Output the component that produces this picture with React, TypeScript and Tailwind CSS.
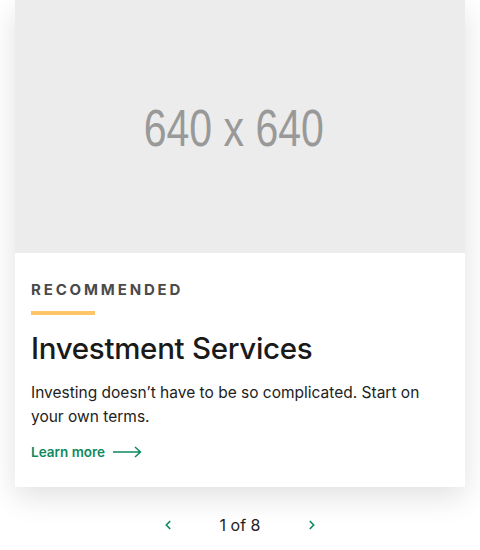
import { ChevronLeft, ChevronRight } from "lucide-react";

export default function App() {
  return (
    <div className="min-h-[550px] bg-white font-['Inter',sans-serif]">
      <div className="mx-[15px] bg-white shadow-[0_10px_28px_rgba(0,0,0,0.12)]">
        {/* placeholder image */}
        <div className="flex h-[253px] items-center justify-center bg-[#ececec]">
          <span className="mt-[3px] mr-[12px] origin-center scale-x-[0.82] scale-y-[1.04] font-['Liberation_Sans',Arial,sans-serif] text-[50px] leading-none text-[#999999]">
            640 x 640
          </span>
        </div>

        <div className="px-4 pt-[27px] pb-[25px]">
          <p className="text-[15px] font-bold uppercase leading-5 tracking-[0.19em] text-[#4a4a4a]">
            Recommended
          </p>
          <div className="mt-[11px] h-1 w-16 bg-[#fcc565]" />
          <h2 className="mt-[15px] text-[29.5px] font-medium leading-9 tracking-[-0.01em] text-[#1a1a1a]">
            Investment Services
          </h2>
          <p className="mt-[15px] text-[15.5px] leading-6 text-[#222222]">
            Investing doesn’t have to be so complicated. Start on your own terms.
          </p>
          <a
            href="#"
            className="mt-[13px] flex items-center gap-[8px] text-[13.5px] font-semibold leading-5 text-[#0f8a5f]"
          >
            Learn more
            <svg width="29" height="12" viewBox="0 0 29 12" fill="none" stroke="currentColor" strokeWidth="1.5">
              <path d="M0 6h27.5M22 1l5.5 5-5.5 5" />
            </svg>
          </a>
        </div>
      </div>

      <div className="mt-[26px] flex items-center justify-center gap-[45px]">
        <button className="text-[#0f8a5f]">
          <ChevronLeft size={14} strokeWidth={3} />
        </button>
        <span className="text-[16px] text-[#222222]">1 of 8</span>
        <button className="text-[#0f8a5f]">
          <ChevronRight size={14} strokeWidth={3} />
        </button>
      </div>
    </div>
  );
}
